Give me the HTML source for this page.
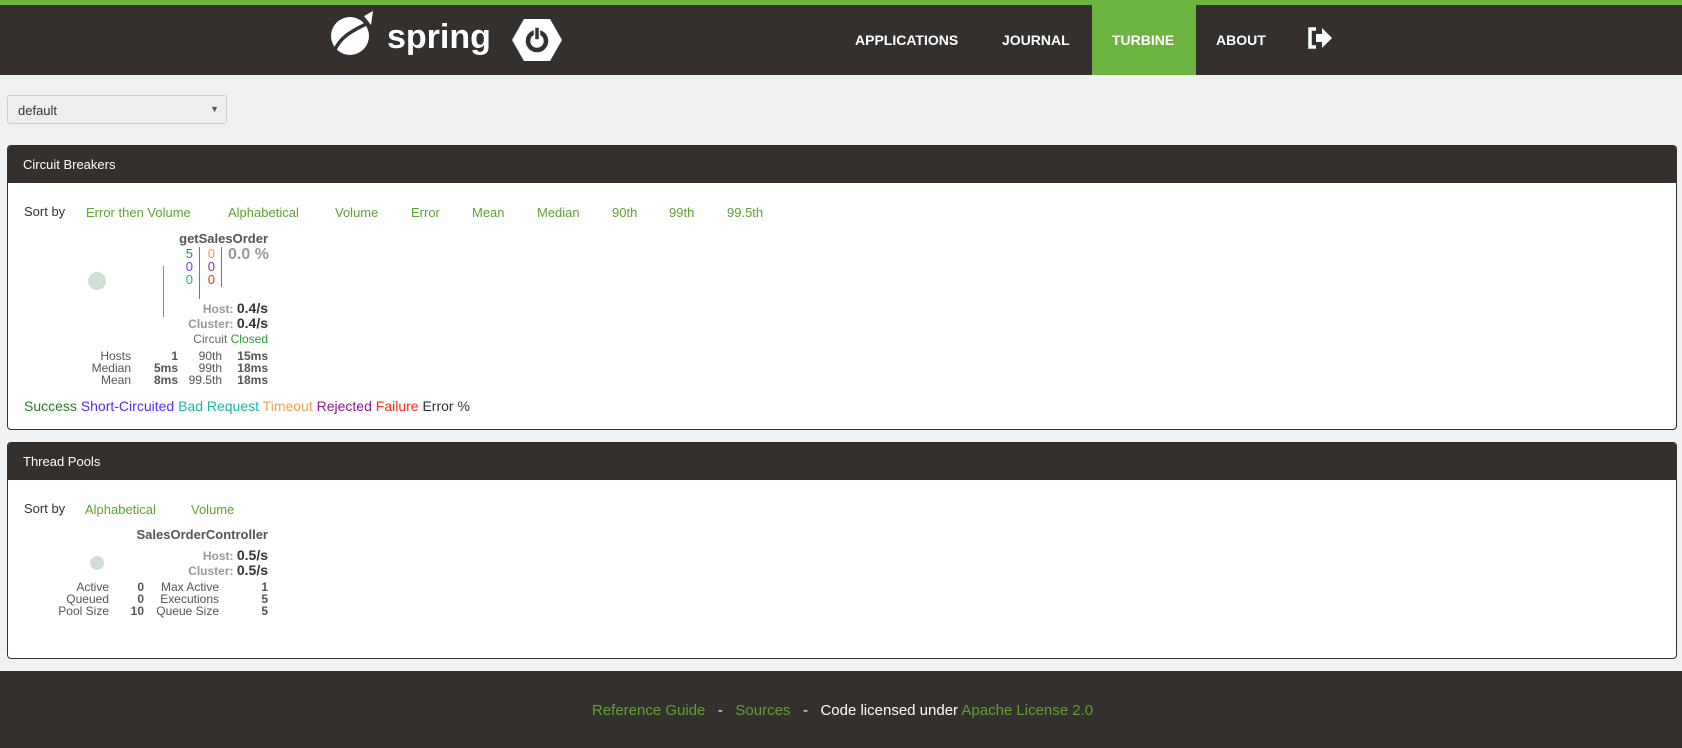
<!DOCTYPE html>
<html><head><meta charset="utf-8"><style>
*{margin:0;padding:0;box-sizing:border-box}
body{width:1682px;height:748px;background:#f1f1f1;font-family:"Liberation Sans",Arial,sans-serif;position:relative;overflow:hidden}
.a{position:absolute;white-space:nowrap}
.top{position:absolute;left:0;top:0;width:1682px;height:5px;background:#6db33f}
.nav{position:absolute;left:0;top:5px;width:1682px;height:70px;background:#34302d}
.nav .it{position:absolute;top:27px;color:#fff;font-weight:bold;font-size:14px}
.turb{position:absolute;left:1092px;top:0;width:104px;height:70px;background:#6db33f}
.sel{position:absolute;left:7px;top:95px;width:220px;height:29px;border:1px solid #ccc;border-radius:3px;background:#eee;font-size:13px;color:#333;padding:7px 0 0 10px}
.panel{position:absolute;left:7px;width:1670px;background:#fff;border:1px solid #34302d;border-radius:4px;overflow:hidden}
.ph{height:37px;background:#34302d;color:#fff;font-size:13px;padding:11px 0 0 15px}
.g{color:#5fa134}
.s13{font-size:13px}
.s12{font-size:12px;color:#555}
.gr{color:#999;font-weight:bold}
.r{text-align:right}
.foot{position:absolute;left:0;top:671px;width:1682px;height:77px;background:#34302d;font-size:15px;color:#fff}
</style></head><body>
<div class="top"></div>
<div class="nav">
 <svg class="a" style="left:330px;top:5px" width="44" height="47" viewBox="0 0 44 47"><ellipse cx="20" cy="26" rx="19" ry="19" fill="#fff"/><path d="M4 42 C10 26 24 20 38 13" stroke="#34302d" stroke-width="3.5" fill="none"/><path d="M34 6 L43 1 L41 15Z" fill="#fff"/></svg>
 <div class="a" style="left:387px;top:15px;color:#fff;font-size:34px;font-weight:bold;line-height:34px">spring</div>
 <svg class="a" style="left:512px;top:13px" width="50" height="44" viewBox="0 0 50 44"><polygon points="12,1 38,1 50,22 38,43 12,43 0,22" fill="#fff"/><circle cx="25" cy="23" r="9" stroke="#34302d" stroke-width="4.5" fill="none"/><rect x="22.5" y="9" width="5" height="13" fill="#34302d" stroke="#fff" stroke-width="1.5"/></svg>
 <div class="turb"></div>
 <div class="it" style="left:855px">APPLICATIONS</div>
 <div class="it" style="left:1002px">JOURNAL</div>
 <div class="it" style="left:1112px">TURBINE</div>
 <div class="it" style="left:1216px">ABOUT</div>
 <svg class="a" style="left:1307px;top:22px" width="26" height="22" viewBox="0 0 26 22"><path d="M9 2 H3 V20 H9" stroke="#fff" stroke-width="3.5" fill="none"/><path d="M9 7 H15 V1 L25 11 L15 21 V15 H9Z" fill="#fff"/></svg>
</div>
<div class="sel">default<span class="a" style="right:7px;top:8px;font-size:9px;color:#555">▼</span></div>

<div class="panel" style="top:145px;height:285px"><div class="ph">Circuit Breakers</div>
 <div class="a s13" style="left:16px;top:58px;color:#333">Sort by</div>
 <div class="a s13 g" style="left:78px;top:59px">Error then Volume</div>
 <div class="a s13 g" style="left:220px;top:59px">Alphabetical</div>
 <div class="a s13 g" style="left:327px;top:59px">Volume</div>
 <div class="a s13 g" style="left:403px;top:59px">Error</div>
 <div class="a s13 g" style="left:464px;top:59px">Mean</div>
 <div class="a s13 g" style="left:529px;top:59px">Median</div>
 <div class="a s13 g" style="left:604px;top:59px">90th</div>
 <div class="a s13 g" style="left:661px;top:59px">99th</div>
 <div class="a s13 g" style="left:719px;top:59px">99.5th</div>
 <div class="a" style="left:80px;top:126px;width:18px;height:18px;border-radius:50%;background:#cfe0d3"></div>
 <div class="a" style="left:155px;top:120px;width:1px;height:51px;background:#6d8fb0"></div>
 <div class="a r" style="left:100px;top:85px;width:160px;font-size:13px;font-weight:bold;color:#555">getSalesOrder</div>
 <div class="a r" style="left:160px;top:101px;width:25px;font-size:13px;line-height:13px"><span style="color:#2a9a2a">5</span><br><span style="color:#6f3fff">0</span><br><span style="color:#1ab5a8">0</span></div>
 <div class="a" style="left:191px;top:101px;width:1px;height:52px;background:#777"></div>
 <div class="a r" style="left:182px;top:101px;width:25px;font-size:13px;line-height:13px"><span style="color:#f7a030">0</span><br><span style="color:#8e2c9a">0</span><br><span style="color:#ff2a1a">0</span></div>
 <div class="a" style="left:213px;top:101px;width:1px;height:40px;background:#777"></div>
 <div class="a gr" style="left:220px;top:100px;font-size:16px">0.0 %</div>
 <div class="a r" style="left:100px;top:154px;width:160px;font-size:12px"><span class="gr">Host: </span><b style="font-size:14px;color:#333">0.4/s</b></div>
 <div class="a r" style="left:100px;top:169px;width:160px;font-size:12px"><span class="gr">Cluster: </span><b style="font-size:14px;color:#333">0.4/s</b></div>
 <div class="a r s12" style="left:100px;top:186px;width:160px;color:#666">Circuit <span style="color:#2a9a2a">Closed</span></div>
 <div class="a r s12" style="left:40px;top:204px;width:83px;line-height:12px">Hosts<br>Median<br>Mean</div>
 <div class="a r s12" style="left:120px;top:204px;width:50px;line-height:12px;font-weight:bold">1<br>5ms<br>8ms</div>
 <div class="a r s12" style="left:160px;top:204px;width:54px;line-height:12px">90th<br>99th<br>99.5th</div>
 <div class="a r s12" style="left:210px;top:204px;width:50px;line-height:12px;font-weight:bold">15ms<br>18ms<br>18ms</div>
 <div class="a" style="left:16px;top:252px;font-size:14px"><span style="color:#2a7a2a">Success</span> <span style="color:#5a2aff">Short-Circuited</span> <span style="color:#1ab5a8">Bad Request</span> <span style="color:#f7a050">Timeout</span> <span style="color:#8e1a8a">Rejected</span> <span style="color:#ff2a1a">Failure</span> <span style="color:#333">Error %</span></div>
</div>

<div class="panel" style="top:442px;height:217px"><div class="ph">Thread Pools</div>
 <div class="a s13" style="left:16px;top:58px;color:#333">Sort by</div>
 <div class="a s13 g" style="left:77px;top:59px">Alphabetical</div>
 <div class="a s13 g" style="left:183px;top:59px">Volume</div>
 <div class="a r" style="left:60px;top:84px;width:200px;font-size:13px;font-weight:bold;color:#555">SalesOrderController</div>
 <div class="a" style="left:82px;top:113px;width:14px;height:14px;border-radius:50%;background:#cfe0d3"></div>
 <div class="a r" style="left:100px;top:104px;width:160px;font-size:12px"><span class="gr">Host: </span><b style="font-size:14px;color:#333">0.5/s</b></div>
 <div class="a r" style="left:100px;top:119px;width:160px;font-size:12px"><span class="gr">Cluster: </span><b style="font-size:14px;color:#333">0.5/s</b></div>
 <div class="a r s12" style="left:20px;top:138px;width:81px;line-height:12px">Active<br>Queued<br>Pool Size</div>
 <div class="a r s12" style="left:100px;top:138px;width:36px;line-height:12px;font-weight:bold">0<br>0<br>10</div>
 <div class="a r s12" style="left:140px;top:138px;width:71px;line-height:12px">Max Active<br>Executions<br>Queue Size</div>
 <div class="a r s12" style="left:220px;top:138px;width:40px;line-height:12px;font-weight:bold">1<br>5<br>5</div>
</div>

<div class="foot"><div class="a" style="left:592px;top:31px"><span class="g">Reference Guide</span> &nbsp;&nbsp;- &nbsp;&nbsp;<span class="g">Sources</span> &nbsp;&nbsp;- &nbsp;&nbsp;Code licensed under <span class="g">Apache License 2.0</span></div></div>
</body></html>
